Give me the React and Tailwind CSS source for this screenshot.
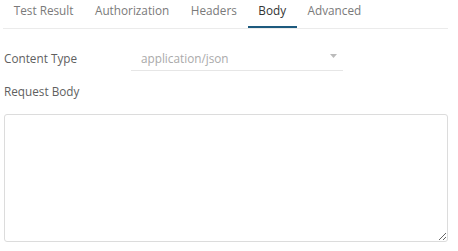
import { useState } from 'react'

const tabs = ['Test Result', 'Authorization', 'Headers', 'Body', 'Advanced']

export default function App() {
  const [active, setActive] = useState('Body')

  return (
    <div className="w-[458px] h-[251px] bg-white font-['Open_Sans',sans-serif] text-[11.75px] overflow-hidden">
      {/* Tabs */}
      <div className="mx-[3px] w-[445px] flex border-b border-[#ebebeb] h-[29px]">
        {tabs.map((t) => (
          <button
            key={t}
            onClick={() => setActive(t)}
            className={
              'h-[28px] pb-[5px] px-[10.75px] border-b-2 ' +
              (active === t ? 'text-[#333] border-[#1d5a7e]' : 'text-[#7a7a7a] border-transparent')
            }
          >
            {t}
          </button>
        ))}
      </div>

      {/* Content type */}
      <div className="flex items-center mt-[18px] pl-[4px] h-[24px]">
        <span className="w-[127px] text-[#5f5f5f]">Content Type</span>
        <div className="w-[212px] h-[24px] flex items-center justify-between border-b border-[#e6e6e6] pl-[10px] pr-[6px]">
          <span className="text-[#aaa]">application/json</span>
          <svg width="7" height="4" viewBox="0 0 7 4" className="-mt-[5px]">
            <path d="M0 0h7L3.5 4z" fill="#bbb" />
          </svg>
        </div>
      </div>

      <div className="pl-[4px] mt-[12px] text-[#5f5f5f]">Request Body</div>

      <textarea className="block mt-[13px] ml-[4px] w-[444px] h-[128px] border border-[#dcdcdc] rounded-[3px] resize outline-none" />
    </div>
  )
}
